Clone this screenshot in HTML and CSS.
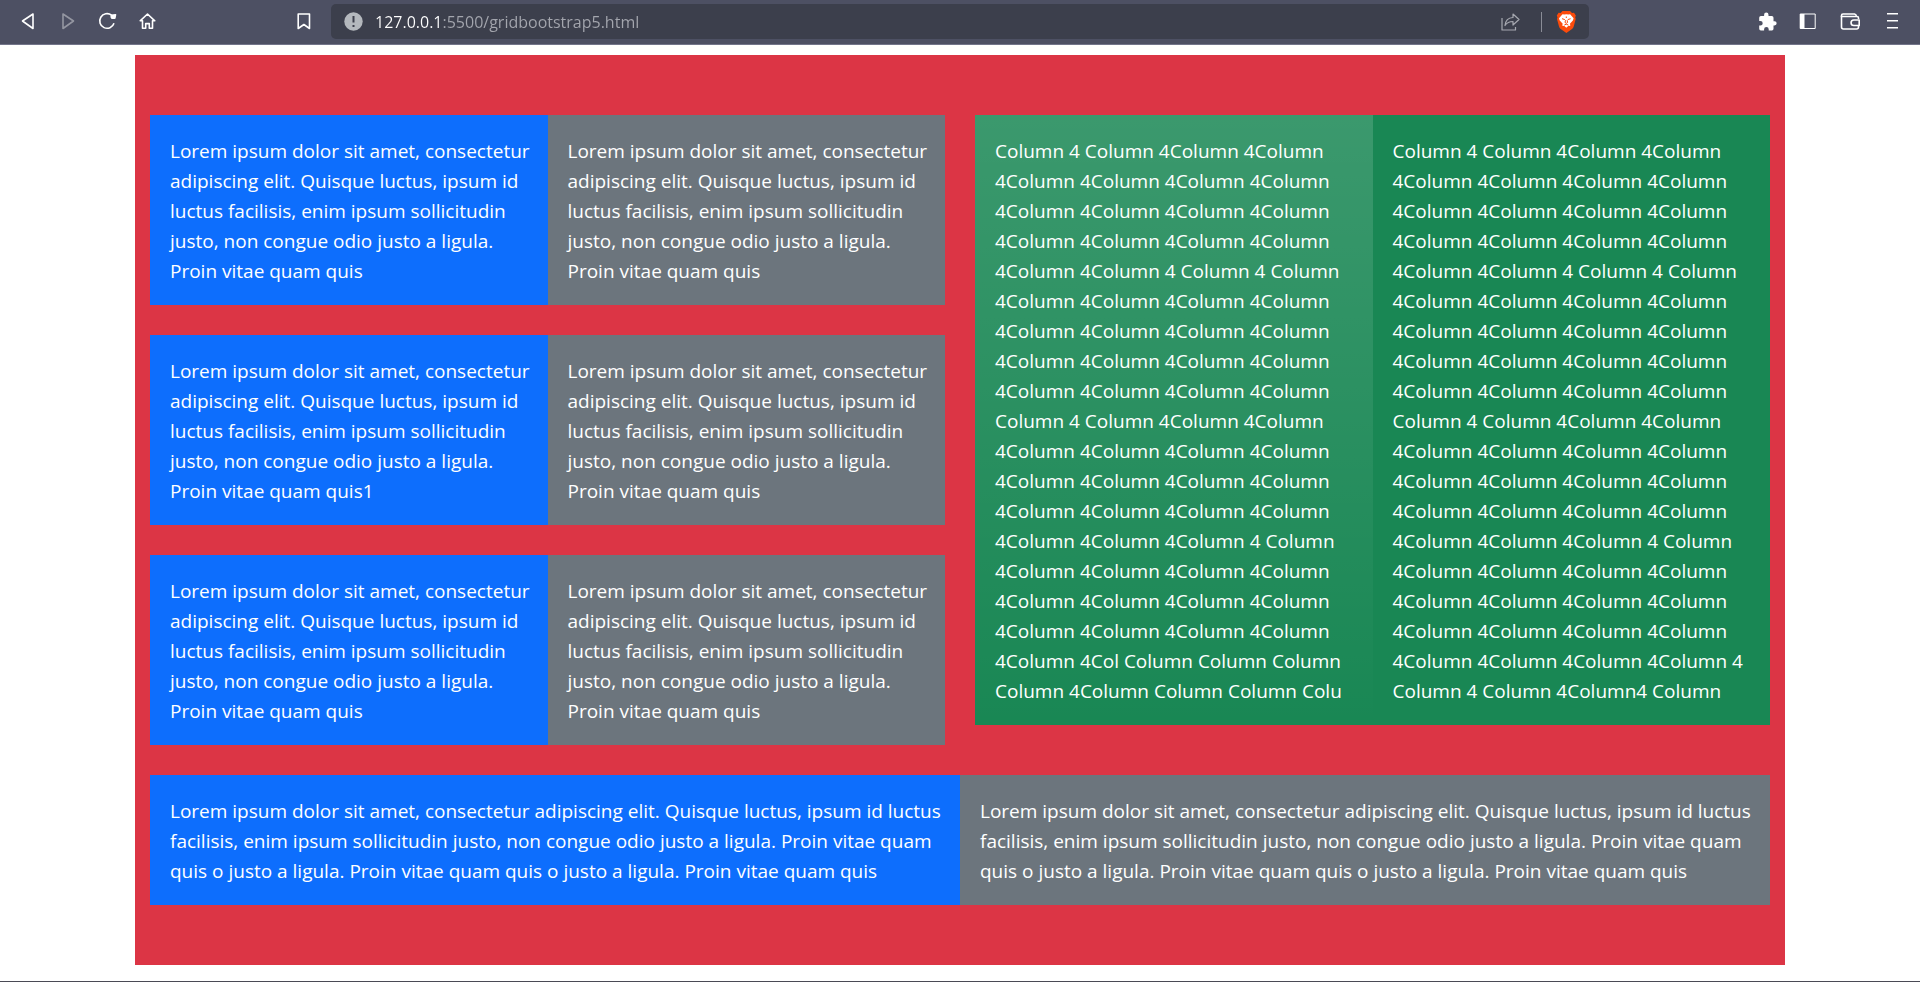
FILE: index.html
```html
<!DOCTYPE html>
<html lang="en">
<head>
<meta charset="utf-8">
<meta name="viewport" content="width=device-width, initial-scale=1">
<title>Grid Bootstrap 5</title>
<link rel="stylesheet" href="styles.css">
</head>
<body>
<header class="toolbar">
  <nav class="tools tools-left" aria-label="Navigation">
    <button class="tool" type="button" aria-label="Back"><svg viewBox="0 0 25 25"><path d="M7.5 12 18 5v14.5z"/></svg></button>
    <button class="tool tool-disabled" type="button" aria-label="Forward"><svg viewBox="0 0 25 25"><path d="M18.5 12 8 5v14.5z"/></svg></button>
    <button class="tool" type="button" aria-label="Reload"><svg viewBox="0 0 25 25"><path d="M16.5 6.2A7.3 7.3 0 1 0 19 14.2"/><path class="solid" d="M15.800 5.400 20.600 5q.8 0 .7.8L20.600 9.400q-1.200 1.200-4.400.400-1.400-1.600-.4-4.400z"/></svg></button>
    <button class="tool" type="button" aria-label="Home"><svg viewBox="0 0 25 25"><path d="M7.500 11.800H5.200L12.500 5l7.300 6.800h-2.300v7.400h-3.200v-4.600h-3.600v4.600H7.500z"/></svg></button>
    <button class="tool tool-bookmark" type="button" aria-label="Bookmark this page"><svg viewBox="0 0 25 25"><path d="M6.200 5h11.300v14.500l-5.600-4-5.700 4z"/></svg></button>
  </nav>
  <div class="address">
    <button class="address-tool" type="button" aria-label="Site information"><svg viewBox="0 0 25 25"><circle class="info-disc" cx="12.500" cy="12.500" r="9.200"/><path class="info-mark" d="M12.500 7v6.500M12.500 16v2"/></svg></button>
    <input class="address-input" type="text" aria-label="Address" value="127.0.0.1:5500/gridbootstrap5.html" spellcheck="false">
    <button class="address-tool address-share" type="button" aria-label="Share"><svg viewBox="0 0 25 25"><path d="M4 9v12h13.500v-3"/><path d="M7 16.500c.5-5 3-7.800 8-8V5l6 5.500-6 5.500v-3.500c-3.700 0-6 1-8 4z"/></svg></button>
    <span class="address-divider"></span>
    <button class="address-tool" type="button" aria-label="Brave Shields"><svg viewBox="0 0 25 25"><path class="brave-shield" d="M8.500 2h7.500l2 2 2-.2 1.800 2.700-.6 2 .5 1.500-2 7.500q-.5 1.500-1.700 2.500l-5.600 4-5.700-4Q5.500 19 5 17.500L3 10l.5-1.500-.7-2L4.600 3.800l2 .2z"/><path class="brave-face" d="M8.500 5.200 10.500 5.600 12.300 5.200 14.200 5.600 16.100 5.200 19.600 9.200 18.900 11.400 15.900 14.800 16.400 16.500 15.500 17.100 14.500 16.800 12.300 18.800 10.100 16.800 9.100 17.100 8.200 16.500 8.700 14.800 5.700 11.400 5 9.200z"/><path class="brave-lines" d="M8 9.700 10.800 10.600M16.600 9.700 13.800 10.600M12.300 7.500v1.500M11.500 11.200 11 13.500 12.300 14.300 13.600 13.500 13.100 11.200M10.300 16 12.300 15.200 14.300 16"/></svg></button>
  </div>
  <nav class="tools tools-right" aria-label="Browser tools">
    <button class="tool" type="button" aria-label="Extensions"><svg viewBox="0 0 25 25"><path class="solid" d="M18.500 12.200h-1V8.700q0-1.700-1.700-1.700h-3.300V5.700a2.200 2.200 0 0 0-4.400 0V7H4.900q-1.700 0-1.700 1.700v3.200h1.200a2.300 2.300 0 0 1 0 4.600H3.200v3.200q0 1.700 1.700 1.700h3.200v-1.200a2.300 2.300 0 0 1 4.600 0v1.200h3.200q1.600 0 1.600-1.700v-3.200h1a2.150 2.150 0 0 0 0-4.300z"/></svg></button>
    <button class="tool" type="button" aria-label="Sidebar"><svg viewBox="0 0 25 25"><path class="thin" d="M3.200 5h15v14.500h-15z"/><path class="solid" d="M3 5h4.500v14.500H3z"/></svg></button>
    <button class="tool" type="button" aria-label="Wallet"><svg viewBox="0 0 25 25"><path d="M20.500 10V9q0-1.500-1.500-1.500H3.500V18q0 2 2 2H18.500q2 0 2-2v-1"/><path d="M3.500 8V6.500Q3.500 5 5 5H16.500q1.700.4 2 2.500"/><path d="M21.200 11v5.500h-5.400a2.750 2.750 0 0 1 0-5.500z"/></svg></button>
    <button class="tool" type="button" aria-label="Menu"><svg viewBox="0 0 25 25"><path d="M8 4.800h11M8 11.800h11M8 18.800h11"/></svg></button>
  </nav>
</header>

<main class="container">
  <div class="columns">
    <div class="stack">
      <section class="row">
        <p class="cell blue">Lorem ipsum dolor sit amet, consectetur<br>adipiscing elit. Quisque luctus, ipsum id<br>luctus facilisis, enim ipsum sollicitudin<br>justo, non congue odio justo a ligula.<br>Proin vitae quam quis</p>
        <p class="cell gray">Lorem ipsum dolor sit amet, consectetur<br>adipiscing elit. Quisque luctus, ipsum id<br>luctus facilisis, enim ipsum sollicitudin<br>justo, non congue odio justo a ligula.<br>Proin vitae quam quis</p>
      </section>
      <section class="row">
        <p class="cell blue">Lorem ipsum dolor sit amet, consectetur<br>adipiscing elit. Quisque luctus, ipsum id<br>luctus facilisis, enim ipsum sollicitudin<br>justo, non congue odio justo a ligula.<br>Proin vitae quam quis1</p>
        <p class="cell gray">Lorem ipsum dolor sit amet, consectetur<br>adipiscing elit. Quisque luctus, ipsum id<br>luctus facilisis, enim ipsum sollicitudin<br>justo, non congue odio justo a ligula.<br>Proin vitae quam quis</p>
      </section>
      <section class="row">
        <p class="cell blue">Lorem ipsum dolor sit amet, consectetur<br>adipiscing elit. Quisque luctus, ipsum id<br>luctus facilisis, enim ipsum sollicitudin<br>justo, non congue odio justo a ligula.<br>Proin vitae quam quis</p>
        <p class="cell gray">Lorem ipsum dolor sit amet, consectetur<br>adipiscing elit. Quisque luctus, ipsum id<br>luctus facilisis, enim ipsum sollicitudin<br>justo, non congue odio justo a ligula.<br>Proin vitae quam quis</p>
      </section>
    </div>
    <section class="row row-tall">
      <p class="cell green gradient">Column 4 Column 4Column 4Column<br>4Column 4Column 4Column 4Column<br>4Column 4Column 4Column 4Column<br>4Column 4Column 4Column 4Column<br>4Column 4Column 4 Column 4 Column<br>4Column 4Column 4Column 4Column<br>4Column 4Column 4Column 4Column<br>4Column 4Column 4Column 4Column<br>4Column 4Column 4Column 4Column<br>Column 4 Column 4Column 4Column<br>4Column 4Column 4Column 4Column<br>4Column 4Column 4Column 4Column<br>4Column 4Column 4Column 4Column<br>4Column 4Column 4Column 4 Column<br>4Column 4Column 4Column 4Column<br>4Column 4Column 4Column 4Column<br>4Column 4Column 4Column 4Column<br>4Column 4Col Column Column Column<br>Column 4Column Column Column Colu</p>
      <p class="cell green">Column 4 Column 4Column 4Column<br>4Column 4Column 4Column 4Column<br>4Column 4Column 4Column 4Column<br>4Column 4Column 4Column 4Column<br>4Column 4Column 4 Column 4 Column<br>4Column 4Column 4Column 4Column<br>4Column 4Column 4Column 4Column<br>4Column 4Column 4Column 4Column<br>4Column 4Column 4Column 4Column<br>Column 4 Column 4Column 4Column<br>4Column 4Column 4Column 4Column<br>4Column 4Column 4Column 4Column<br>4Column 4Column 4Column 4Column<br>4Column 4Column 4Column 4 Column<br>4Column 4Column 4Column 4Column<br>4Column 4Column 4Column 4Column<br>4Column 4Column 4Column 4Column<br>4Column 4Column 4Column 4Column 4<br>Column 4 Column 4Column4 Column</p>
    </section>
  </div>
  <section class="row">
    <p class="cell blue">Lorem ipsum dolor sit amet, consectetur adipiscing elit. Quisque luctus, ipsum id luctus<br>facilisis, enim ipsum sollicitudin justo, non congue odio justo a ligula. Proin vitae quam<br>quis o justo a ligula. Proin vitae quam quis o justo a ligula. Proin vitae quam quis</p>
    <p class="cell gray">Lorem ipsum dolor sit amet, consectetur adipiscing elit. Quisque luctus, ipsum id luctus<br>facilisis, enim ipsum sollicitudin justo, non congue odio justo a ligula. Proin vitae quam<br>quis o justo a ligula. Proin vitae quam quis o justo a ligula. Proin vitae quam quis</p>
  </section>
</main>
</body>
</html>
```
FILE: styles.css
```css
*,
*::before,
*::after {
  box-sizing: border-box;
}

body {
  margin: 0;
  min-height: 100vh;
  border-bottom: 1px solid #4a4a55;
  background: #fff;
  font-family: "Open Sans", "Noto Sans", sans-serif;
  font-size: 19px;
  line-height: 30px;
}

/* Browser toolbar */
.toolbar {
  display: grid;
  grid-template-columns: 331fr 1258fr 331fr;
  padding: 4px 0 5px;
  border-bottom: 1px solid #73758a;
  background: #4d5063;
}

.tools {
  display: flex;
  align-items: center;
}

.tools-left {
  gap: 1px;
  padding: 0 7px 0 8px;
}

.tools-right {
  justify-content: flex-end;
  gap: 2px;
  padding-right: 9px;
}

.tool,
.address-tool {
  display: flex;
  align-items: center;
  justify-content: center;
  flex: none;
  height: 35px;
  padding: 0;
  border: 0;
  background: none;
  color: #fff;
}

.tool {
  width: 39px;
}

.tool-bookmark {
  margin-left: auto;
}

.tool-disabled {
  color: #9496a1;
}

svg {
  width: 25px;
  height: 25px;
  fill: none;
  stroke: currentColor;
  stroke-width: 1.6;
  stroke-linejoin: round;
}

.solid {
  fill: currentColor;
  stroke: none;
}

.thin {
  stroke-width: 1;
}

.address {
  display: flex;
  align-items: center;
  min-width: 0;
  padding: 0 10px;
  border-radius: 5px;
  background: #3c3f4c;
}

.address-input {
  flex: 1;
  min-width: 0;
  height: 35px;
  margin: 0 9px;
  padding: 0;
  border: 0;
  outline: 0;
  background: linear-gradient(to right, #fff 68px, #a4a6ae 68px);
  background-clip: text;
  -webkit-background-clip: text;
  color: transparent;
  font: inherit;
  font-size: 16px;
}

.address-share {
  color: #a6a8b0;
}

.address-share svg {
  stroke-width: 1.2;
}

.address-divider {
  width: 1px;
  height: 20px;
  margin: 0 12px 0 18px;
  background: #8a8c96;
}

.info-disc {
  fill: #b4b8bd;
  stroke: none;
}

.info-mark {
  stroke: #3c3f4c;
  stroke-width: 2;
}

.brave-shield {
  fill: #fb4b0b;
  stroke: none;
}

.brave-face {
  fill: #fff;
  stroke: none;
}

.brave-lines {
  stroke: #fb4b0b;
  stroke-width: 1;
}

/* Page grid */
.container {
  display: grid;
  gap: 30px;
  max-width: 1650px;
  margin: 10px auto 0;
  padding: 60px 15px;
  background: #dc3545;
  color: #fff;
}

.columns {
  display: grid;
  grid-template-columns: repeat(2, minmax(0, 1fr));
  align-items: start;
  gap: 30px;
}

.stack {
  display: grid;
  gap: 30px;
}

.row {
  display: grid;
  grid-template-columns: repeat(2, minmax(0, 1fr));
}

.cell {
  margin: 0;
  padding: 21px 20px 19px;
  white-space: nowrap;
}

.blue {
  background-color: #0d6efd;
}

.gray {
  background-color: #6c757d;
}

.green {
  background-color: #198754;
}

.gradient {
  background-image: linear-gradient(180deg, rgba(255, 255, 255, 0.15), rgba(255, 255, 255, 0));
}
```
